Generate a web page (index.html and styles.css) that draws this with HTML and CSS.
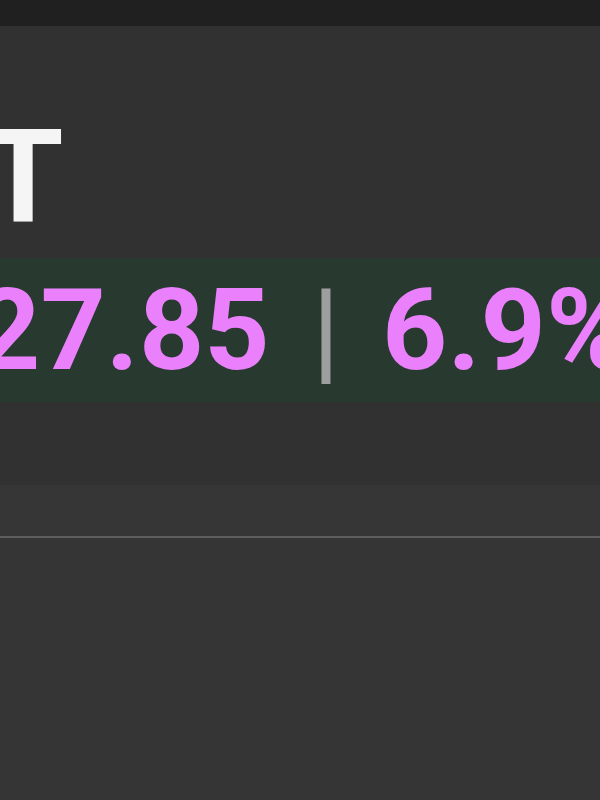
FILE: index.html
```html
<!DOCTYPE html>
<html lang="en">
<head>
    <meta charset="UTF-8">
    <meta name="viewport" content="width=device-width, initial-scale=1.0">
    <title>Quote</title>
    <link rel="stylesheet" href="styles.css">
</head>
<body>
    <div class="topbar"></div>

    <div class="quote">
        <h1 class="ticker">T</h1>
        <div class="price-band">
            <span class="price">27.85</span>
            <span class="divider">|</span>
            <span class="change">6.9%</span>
        </div>
    </div>

    <div class="tabs"></div>
    <div class="content"></div>
</body>
</html>
```
FILE: styles.css
```css
:root {
    --topbar: #202020;
    --background: #313131;
    --band: #28392f;
    --accent: #ea80fc;
    --muted: #9e9e9e;
    --panel: #363636;
    --line: #5e5e5e;
}

body {
    margin: 0;
    padding: 0;
    background: #353535;
    font-family: Roboto, "Noto Sans", sans-serif;
    overflow: hidden;
}

.topbar {
    height: 26px;
    background: var(--topbar);
}

.quote {
    background: var(--background);
    padding: 87px 0 83px;
    overflow: hidden;
}

.ticker {
    margin: 0 0 15px -17px;
    font-size: 130px;
    font-weight: 700;
    line-height: 1;
    color: #f5f5f5;
}

.price-band {
    display: flex;
    align-items: baseline;
    gap: 42px;
    background: var(--band);
    padding: 15px 0;
    margin-left: -25px;
    font-size: 114px;
    font-weight: 700;
    line-height: 1;
    white-space: nowrap;
}

.price,
.change {
    color: var(--accent);
}

.divider {
    color: var(--muted);
    font-weight: 500;
}

.tabs {
    height: 51px;
    background: var(--panel);
    border-bottom: 2px solid var(--line);
}

.content {
    height: 300px;
    background: #353535;
}
```
